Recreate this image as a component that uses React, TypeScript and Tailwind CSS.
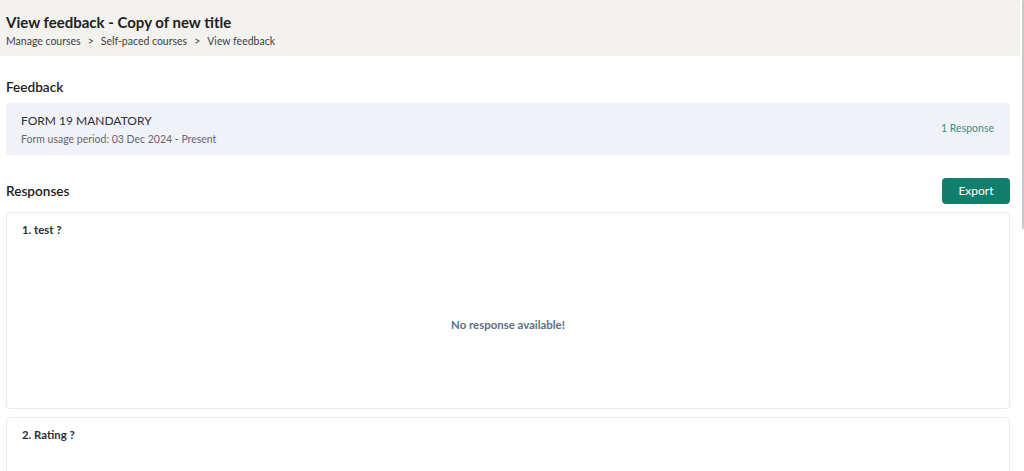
import React from "react";

export default function App() {
  return (
    <div className="flex h-[471px] w-[1024px] overflow-hidden bg-white text-[#1f2328]" style={{ fontFamily: "Lato, 'Noto Sans', sans-serif" }}>
      <div className="flex w-[1020px] shrink-0 flex-col">
        <div className="flex h-[56px] shrink-0 flex-col bg-[#f3f2ef] px-[6px] pt-[13px]">
          <h1 className="text-[15px] font-bold leading-[18px] text-[#202124]">View feedback - Copy of new title</h1>
          <div className="mt-[3px] flex items-center gap-[7px] text-[10.5px] leading-[14px] text-[#3d4149]">
            <span>Manage courses</span>
            <span>&gt;</span>
            <span>Self-paced courses</span>
            <span>&gt;</span>
            <span>View feedback</span>
          </div>
        </div>
        <div className="flex shrink-0 flex-col px-[6px] pr-[10px]">
          <h2 className="mt-[22px] shrink-0 text-[13.6px] font-semibold leading-[18px] text-[#202124]">Feedback</h2>
          <div className="mt-[7px] flex h-[52px] shrink-0 items-center justify-between rounded-[4px] bg-[#f1f2f7] pl-[15px] pr-[16px]">
            <div className="flex flex-col">
              <span className="text-[12px] leading-[15px] text-[#2b2f36]">FORM 19 MANDATORY</span>
              <span className="mt-[4px] text-[10.5px] leading-[14px] text-[#626873]">Form usage period: 03 Dec 2024 - Present</span>
            </div>
            <span className="text-[10.5px] text-[#3d8d80]">1 Response</span>
          </div>
          <div className="mt-[23px] flex shrink-0 items-center justify-between">
            <h2 className="text-[13.6px] font-semibold leading-[18px] text-[#202124]">Responses</h2>
            <button className="flex h-[26px] w-[68px] items-center justify-center rounded-[4px] bg-[#127f6d] text-[12px] text-white">Export</button>
          </div>
          <div className="mt-[8px] flex h-[197px] shrink-0 flex-col rounded-[4px] border border-[#e9eaec] px-[15px] pt-[9px]">
            <span className="text-[11.4px] font-bold leading-[16px] text-[#2b2f36]">1. test ?</span>
            <div className="flex flex-1 items-center justify-center pt-[4px]">
              <span className="text-[11.4px] font-bold text-[#5a6f84]">No response available!</span>
            </div>
          </div>
          <div className="mt-[8px] flex h-[120px] shrink-0 flex-col rounded-[4px] border border-[#e9eaec] px-[15px] pt-[9px]">
            <span className="text-[11.4px] font-bold leading-[16px] text-[#2b2f36]">2. Rating ?</span>
          </div>
        </div>
      </div>
      <div className="flex w-[4px] shrink-0 flex-col items-center">
        <div className="ml-[2px] h-[229px] w-[2px] shrink-0 rounded-full bg-[#c8c8c8]" />
      </div>
    </div>
  );
}
